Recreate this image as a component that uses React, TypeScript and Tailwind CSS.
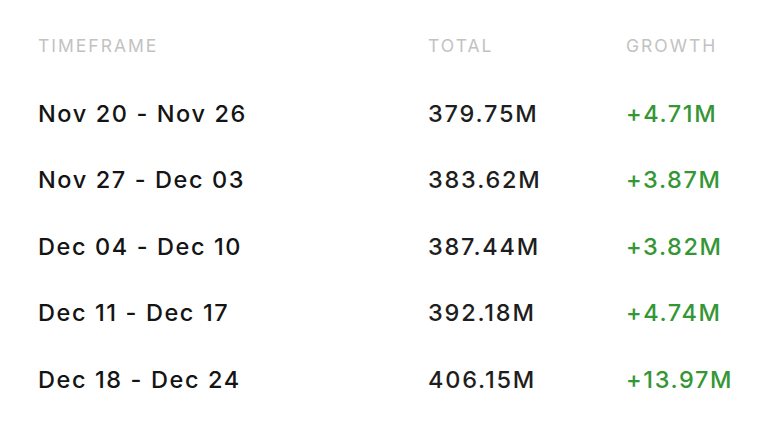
import React from 'react';

interface Row {
  timeframe: string;
  total: string;
  growth: string;
}

const rows: Row[] = [
  { timeframe: 'Nov 20 - Nov 26', total: '379.75M', growth: '+4.71M' },
  { timeframe: 'Nov 27 - Dec 03', total: '383.62M', growth: '+3.87M' },
  { timeframe: 'Dec 04 - Dec 10', total: '387.44M', growth: '+3.82M' },
  { timeframe: 'Dec 11 - Dec 17', total: '392.18M', growth: '+4.74M' },
  { timeframe: 'Dec 18 - Dec 24', total: '406.15M', growth: '+13.97M' },
];

export default function App() {
  return (
    <div className="w-[767px] h-[433px] bg-white pl-[38px] pt-[30px] font-['Inter',_'Noto_Sans',_sans-serif]">
      <div className="grid grid-cols-[390px_198px_1fr] h-[32px] items-center text-[17.5px] tracking-[2px] text-[#c2c2c2]">
        <div>TIMEFRAME</div>
        <div>TOTAL</div>
        <div>GROWTH</div>
      </div>
      <div className="mt-[18px]">
        {rows.map((row) => (
          <div
            key={row.timeframe}
            className="grid grid-cols-[390px_198px_1fr] h-[66.5px] items-center text-[23.5px] font-medium"
          >
            <div className="text-[#141414] tracking-[1.6px]">{row.timeframe}</div>
            <div className="text-[#1e1e1e] tracking-[1.8px]">{row.total}</div>
            <div className="text-[#359635] tracking-[1.6px]">{row.growth}</div>
          </div>
        ))}
      </div>
    </div>
  );
}
